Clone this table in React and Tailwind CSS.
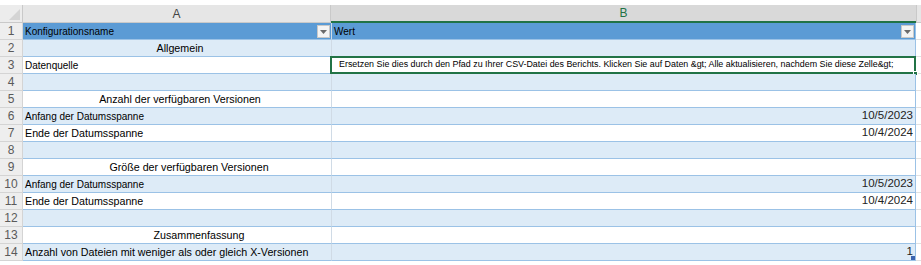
import React from "react";

const rows = [
  { n: 1, band: "head" },
  { n: 2, band: "blue", a: "Allgemein", center: true, off: "pl-[6px]" },
  { n: 3, band: "white", a: "Datenquelle", small: true, sel: true },
  { n: 4, band: "blue" },
  { n: 5, band: "white", a: "Anzahl der verfügbaren Versionen", center: true, off: "pl-[6px]" },
  { n: 6, band: "blue", a: "Anfang der Datumsspanne", small: true, b: "10/5/2023" },
  { n: 7, band: "white", a: "Ende der Datumsspanne", b: "10/4/2024" },
  { n: 8, band: "blue" },
  { n: 9, band: "white", a: "Größe der verfügbaren Versionen", center: true, off: "pl-[24px]" },
  { n: 10, band: "blue", a: "Anfang der Datumsspanne", small: true, b: "10/5/2023" },
  { n: 11, band: "white", a: "Ende der Datumsspanne", b: "10/4/2024" },
  { n: 12, band: "blue" },
  { n: 13, band: "white", a: "Zusammenfassung", center: true, off: "pl-[44px]" },
  { n: 14, band: "blue", a: "Anzahl von Dateien mit weniger als oder gleich X-Versionen", b: "1", corner: true },
];

function Drop({ className }) {
  return (
    <div className={"absolute top-[2px] w-[13px] h-[13px] bg-[#f4f4f4] border border-[#c8c8c8] flex items-center justify-center " + className}>
      <svg width="7" height="4" viewBox="0 0 7 4"><path d="M0 0h7L3.5 4z" fill="#6b6b6b" /></svg>
    </div>
  );
}

export default function App() {
  return (
    <div className="w-[921px] h-[265px] bg-white overflow-hidden font-['Liberation_Sans',Arial,sans-serif] text-black">
      <div className="h-[5px]" />
      {/* column header */}
      <div className="flex h-[18px]">
        <div className="w-[23px] bg-[#ececec] border-r border-b border-[#c9c9c9] relative">
          <svg className="absolute right-[2px] bottom-[2px]" width="11" height="11" viewBox="0 0 11 11"><path d="M11 0V11H0z" fill="#d4d4d4" /></svg>
        </div>
        <div className="w-[308px] bg-[#e6e6e6] border-r border-b border-[#c9c9c9] flex items-center justify-center text-[12px] text-[#444]">A</div>
        <div className="w-[585px] bg-[#d9d9d9] border-b-2 border-[#217346] flex items-center justify-center text-[12px] text-[#217346]">B</div>
        <div className="flex-1 bg-[#e6e6e6] border-l border-b border-[#c9c9c9]" />
      </div>
      {rows.map((r) => {
        const bg = r.band === "head" ? "bg-[#5b9bd5]" : r.band === "blue" ? "bg-[#ddebf7]" : "bg-white";
        return (
          <div key={r.n} className="flex h-[17px]">
            <div className="w-[23px] bg-[#eeeeee] border-r border-b border-[#d4d4d4] text-[12px] text-[#5a5a5a] flex items-center justify-center leading-none">
              {r.n}
            </div>
            <div className={"w-[308px] relative border-b border-[#9bc2e6] flex items-center whitespace-nowrap " + bg + (r.center ? " justify-center " + r.off : " pl-[2px]")}>
              {r.band === "head" ? (
                <>
                  <span className="text-[10px]">Konfigurationsname</span>
                  <Drop className="right-[1px]" />
                </>
              ) : (
                <span className={r.small ? "text-[10px]" : "text-[10.7px]"}>{r.a}</span>
              )}
            </div>
            <div className={"w-[585px] relative border-l border-r border-b border-l-[#d0dbe6] border-r-[#9bc2e6] border-b-[#9bc2e6] flex items-center whitespace-nowrap " + bg + (r.b ? " justify-end pr-[2px]" : " pl-[2px]")}>
              {r.band === "head" && (
                <>
                  <span className="text-[10px]">Wert</span>
                  <Drop className="right-[1px]" />
                </>
              )}
              {r.sel && (
                <>
                  <span className="text-[8.9px] pl-[5px] overflow-hidden">
                    Ersetzen Sie dies durch den Pfad zu Ihrer CSV-Datei des Berichts. Klicken Sie auf Daten &amp;gt; Alle aktualisieren, nachdem Sie diese Zelle&amp;gt;
                  </span>
                  <div className="absolute -left-[2px] -top-[1px] -right-[1px] -bottom-[1px] border-2 border-[#217346]" />
                  <div className="absolute -right-[3px] -bottom-[3px] w-[5px] h-[5px] bg-[#217346] border border-white" />
                </>
              )}
              {r.b && <span className="text-[11.5px] text-[#222]">{r.b}</span>}
              {r.corner && <div className="absolute right-0 bottom-0 w-[4px] h-[4px] bg-[#3b64b0]" />}
            </div>
            <div className="flex-1 bg-white border-b border-[#e1e1e1]" />
          </div>
        );
      })}
    </div>
  );
}
